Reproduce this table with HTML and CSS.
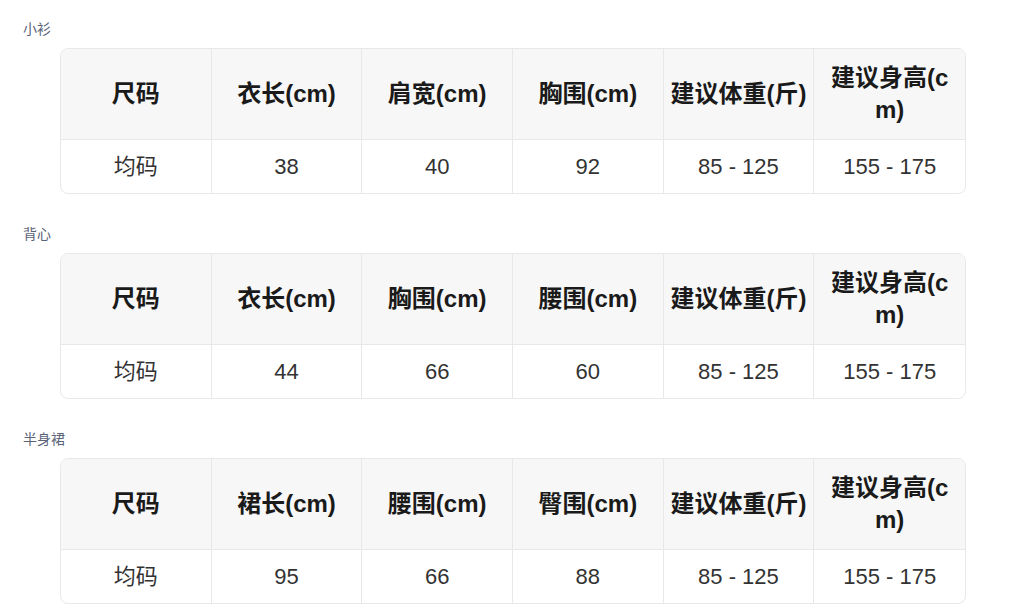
FILE: index.html
```html
<!DOCTYPE html>
<html lang="zh-CN">
<head>
    <meta charset="UTF-8">
    <meta name="viewport" content="width=device-width, initial-scale=1.0">
    <title>尺码表</title>
    <link rel="stylesheet" href="styles.css">
</head>
<body>
    <div class="page">
        <div class="section">
            <div class="label">小衫</div>
            <table class="sizeTable">
                <tr>
                    <th>尺码</th>
                    <th>衣长(cm)</th>
                    <th>肩宽(cm)</th>
                    <th>胸围(cm)</th>
                    <th>建议体重(斤)</th>
                    <th>建议身高(cm)</th>
                </tr>
                <tr>
                    <td>均码</td>
                    <td>38</td>
                    <td>40</td>
                    <td>92</td>
                    <td>85 - 125</td>
                    <td>155 - 175</td>
                </tr>
            </table>
        </div>

        <div class="section">
            <div class="label">背心</div>
            <table class="sizeTable">
                <tr>
                    <th>尺码</th>
                    <th>衣长(cm)</th>
                    <th>胸围(cm)</th>
                    <th>腰围(cm)</th>
                    <th>建议体重(斤)</th>
                    <th>建议身高(cm)</th>
                </tr>
                <tr>
                    <td>均码</td>
                    <td>44</td>
                    <td>66</td>
                    <td>60</td>
                    <td>85 - 125</td>
                    <td>155 - 175</td>
                </tr>
            </table>
        </div>

        <div class="section">
            <div class="label">半身裙</div>
            <table class="sizeTable">
                <tr>
                    <th>尺码</th>
                    <th>裙长(cm)</th>
                    <th>腰围(cm)</th>
                    <th>臀围(cm)</th>
                    <th>建议体重(斤)</th>
                    <th>建议身高(cm)</th>
                </tr>
                <tr>
                    <td>均码</td>
                    <td>95</td>
                    <td>66</td>
                    <td>88</td>
                    <td>85 - 125</td>
                    <td>155 - 175</td>
                </tr>
            </table>
        </div>
    </div>
</body>
</html>
```

FILE: styles.css
```css
body {
    margin: 0;
    background-color: #fff;
    font-family: "Liberation Sans", "Noto Sans CJK SC", sans-serif;
}
.page {
    padding: 19px 0 0 23px;
    display: flex;
    flex-direction: column;
    gap: 30px;
}
.label {
    font-size: 14px;
    line-height: 20px;
    color: #5a6378;
    margin-bottom: 9px;
}
.sizeTable {
    margin-left: 37px;
    width: 906px;
    table-layout: fixed;
    border-collapse: separate;
    border-spacing: 0;
    border: 1px solid #e8e8e8;
    border-radius: 8px;
    overflow: hidden;
}
.sizeTable th,
.sizeTable td {
    text-align: center;
    border-right: 1px solid #e8e8e8;
}
.sizeTable th:last-child,
.sizeTable td:last-child {
    border-right: none;
}
.sizeTable th {
    background-color: #f7f7f7;
    color: #1a1a1a;
    font-size: 24px;
    font-weight: bold;
    line-height: 32px;
    padding: 13px 6px;
    word-break: break-all;
    border-bottom: 1px solid #e8e8e8;
}
.sizeTable td {
    color: #333;
    font-size: 22px;
    line-height: 30px;
    padding: 12px 5px 11px;
}
```
